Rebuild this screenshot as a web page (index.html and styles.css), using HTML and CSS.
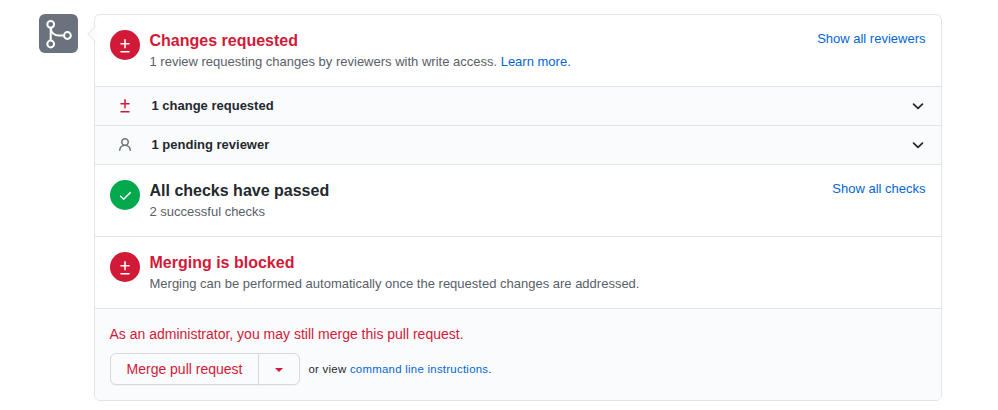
FILE: index.html
```html
<!DOCTYPE html>
<html lang="en">
<head>
<meta charset="utf-8">
<title>Merge status</title>
<link rel="stylesheet" href="styles.css">
</head>
<body>
<svg class="sprite" aria-hidden="true">
  <symbol id="diff" viewBox="0 0 16 16"><path d="M8.75 1.75a.75.75 0 00-1.5 0V5H4a.75.75 0 000 1.5h3.25v3.25a.75.75 0 001.5 0V6.5H12A.75.75 0 0012 5H8.75V1.75zM4 13a.75.75 0 000 1.5h8a.75.75 0 100-1.5H4z"/></symbol>
  <symbol id="chevron" viewBox="0 0 16 16"><path d="M3.6 6.2L8 10.3l4.4-4.1" fill="none" stroke="currentColor" stroke-width="1.8" stroke-linecap="round" stroke-linejoin="round"/></symbol>
</svg>
<main class="merge">
  <div class="badge">
    <svg width="39" height="39" viewBox="0 0 39 39" fill="none" stroke="#fff" stroke-width="2"><circle cx="11.7" cy="10.3" r="3.4"/><circle cx="11.7" cy="30" r="3.4"/><circle cx="28.4" cy="21.5" r="3.4"/><path d="M11.7 13.7v12.9M11.7 13.7c0 4.8 3.7 7.8 8.5 7.8H25"/></svg>
  </div>
  <div class="box">
    <svg class="pointer" width="9" height="16" viewBox="0 0 9 16"><path d="M8.5 0L.7 8l7.8 8" fill="#fafbfc" stroke="#e1e4e8"/></svg>
    <section class="item">
      <span class="status red"><svg width="16" height="16"><use href="#diff"/></svg></span>
      <div class="copy"><h3 class="danger">Changes requested</h3><p>1 review requesting changes by reviewers with write access. <a href="#">Learn more.</a></p></div>
      <a class="toggle" href="#">Show all reviewers</a>
    </section>
    <div class="row">
      <svg class="danger" width="16" height="16"><use href="#diff"/></svg>
      <strong>1 change requested</strong>
      <svg class="chevron" width="16" height="16"><use href="#chevron"/></svg>
    </div>
    <div class="row">
      <svg class="person" width="16" height="16" viewBox="0 0 16 16"><path fill-rule="evenodd" d="M10.5 5a2.5 2.5 0 11-5 0 2.5 2.5 0 015 0zm.061 3.073a4 4 0 10-5.123 0 6.004 6.004 0 00-3.431 5.142.75.75 0 001.498.07 4.5 4.5 0 018.99 0 .75.75 0 101.498-.07 6.005 6.005 0 00-3.432-5.142z"/></svg>
      <strong>1 pending reviewer</strong>
      <svg class="chevron" width="16" height="16"><use href="#chevron"/></svg>
    </div>
    <section class="item">
      <span class="status green"><svg width="16" height="16" viewBox="0 0 16 16"><path d="M13.78 4.22a.75.75 0 010 1.06l-7.25 7.25a.75.75 0 01-1.06 0L2.22 9.28a.75.75 0 011.06-1.06L6 10.94l6.72-6.72a.75.75 0 011.06 0z"/></svg></span>
      <div class="copy"><h3>All checks have passed</h3><p>2 successful checks</p></div>
      <a class="toggle" href="#">Show all checks</a>
    </section>
    <section class="item">
      <span class="status red"><svg width="16" height="16"><use href="#diff"/></svg></span>
      <div class="copy"><h3 class="danger">Merging is blocked</h3><p>Merging can be performed automatically once the requested changes are addressed.</p></div>
    </section>
    <footer class="actions">
      <p class="admin">As an administrator, you may still merge this pull request.</p>
      <div class="controls">
        <div class="group"><button class="btn">Merge pull request</button><button class="btn more" aria-label="Select merge method"><i class="caret"></i></button></div>
        <span class="alt">or view <a href="#">command line instructions</a>.</span>
      </div>
    </footer>
  </div>
</main>
</body>
</html>
```
FILE: styles.css
```css
* { box-sizing: border-box; }
body { margin: 0; background: #fff; color: #24292e; font: 14px/21px "Liberation Sans", Arial, sans-serif; }
a { color: #0366d6; text-decoration: none; }
h3, p { margin: 0; }
svg { display: block; fill: currentColor; flex: none; }
.sprite { position: absolute; width: 0; height: 0; }
.merge { display: flex; align-items: flex-start; gap: 16px; padding: 14px 0 0 39px; }
.badge { width: 39px; height: 39px; border-radius: 6px; background: #6a737d; flex: none; }
.badge svg { fill: none; }
.box { position: relative; width: 848px; border: 1px solid #e1e4e8; border-radius: 6px; }
.pointer { position: absolute; left: -8px; top: 11px; }
.item { display: flex; height: 72px; padding: 15px 15.5px 0 15px; border-bottom: 1px solid #e1e4e8; }
.status { display: flex; align-items: center; justify-content: center; width: 30px; height: 30px; border-radius: 50%; color: #fff; flex: none; }
.red { padding-top: 1px; background: #d11a37; }
.green { background: #04a94d; }
.green svg { width: 15px; height: 15px; }
.danger { color: #d11a37; }
.copy { flex: 1; padding-left: 9.5px; }
.copy h3 { font-size: 16px; line-height: 21px; }
.copy p { margin-top: 1px; font-size: 13px; line-height: 20px; color: #586069; }
.toggle { font-size: 13px; line-height: 18px; }
.row { display: flex; align-items: center; height: 39px; padding: 0 15px 2px 22px; background: #fafbfc; border-bottom: 1px solid #e1e4e8; font-size: 13px; }
.row svg { margin-top: 1px; }
.row strong { flex: 1; margin-left: 18.5px; }
.person { color: #6a737d; }
.actions { height: 91px; padding: 15px 15px 0; background: #fafbfc; border-radius: 0 0 5px 5px; }
.admin { margin-left: -.5px; color: #d11a37; }
.controls { display: flex; align-items: center; gap: 8.5px; margin-top: 8px; }
.group { display: flex; }
.btn { width: 149px; height: 32px; padding: 0; border: 1px solid #d6d8da; border-radius: 6px 0 0 6px; background: #fafbfc; color: #d11a37; font: 14px/20px "Liberation Sans", Arial, sans-serif; box-shadow: 0 1px 0 rgba(27, 31, 35, .04); }
.more { display: flex; align-items: center; justify-content: center; width: 42px; margin-left: -1px; border-radius: 0 6px 6px 0; }
.caret { margin-top: 2px; border: 4px solid transparent; border-top-color: currentColor; border-bottom: 0; }
.alt { font-size: 11.4px; letter-spacing: .27px; }
```
